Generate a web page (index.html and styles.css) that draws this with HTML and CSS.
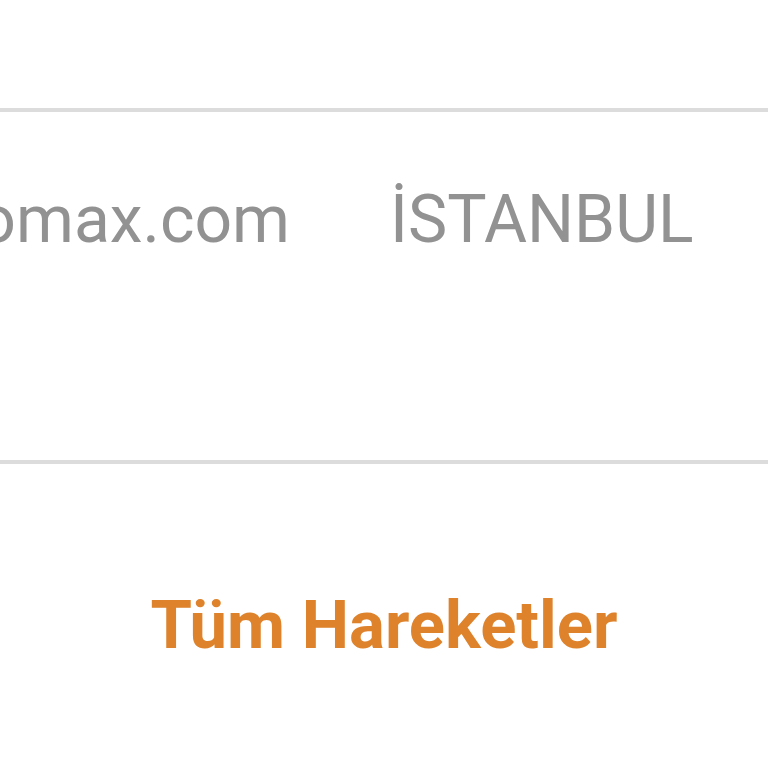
FILE: index.html
```html
<!DOCTYPE html>
<html lang="tr">
<head>
<meta charset="utf-8">
<link rel="stylesheet" href="styles.css">
</head>
<body>
<div class="page">
  <div class="top"></div>
  <div class="divider"></div>
  <div class="row">
    <div class="email"><span>info@cromax.com</span></div>
    <div class="city">İSTANBUL</div>
  </div>
  <div class="divider"></div>
  <div class="footer"><a class="link">Tüm Hareketler</a></div>
</div>
</body>
</html>
```
FILE: styles.css
```css
html, body {
  margin: 0;
  padding: 0;
  background: #ffffff;
}
.page {
  width: 768px;
  height: 768px;
  overflow: hidden;
  font-family: Roboto, "Liberation Sans", sans-serif;
}
.top {
  height: 108px;
}
.divider {
  height: 4px;
  background: #dcdcdc;
}
.row {
  display: flex;
  align-items: flex-start;
  height: 348px;
  padding-top: 75px;
  box-sizing: border-box;
  font-size: 66px;
  line-height: 1;
  color: #929292;
}
.email {
  width: 290px;
  display: flex;
  justify-content: flex-end;
  overflow: hidden;
  white-space: nowrap;
  flex: none;
}
.city {
  margin-left: 100px;
  white-space: nowrap;
}
.footer {
  text-align: center;
  padding-top: 128px;
  font-size: 67px;
  line-height: 1;
  font-weight: 700;
}
.link {
  color: #de832c;
}
```
